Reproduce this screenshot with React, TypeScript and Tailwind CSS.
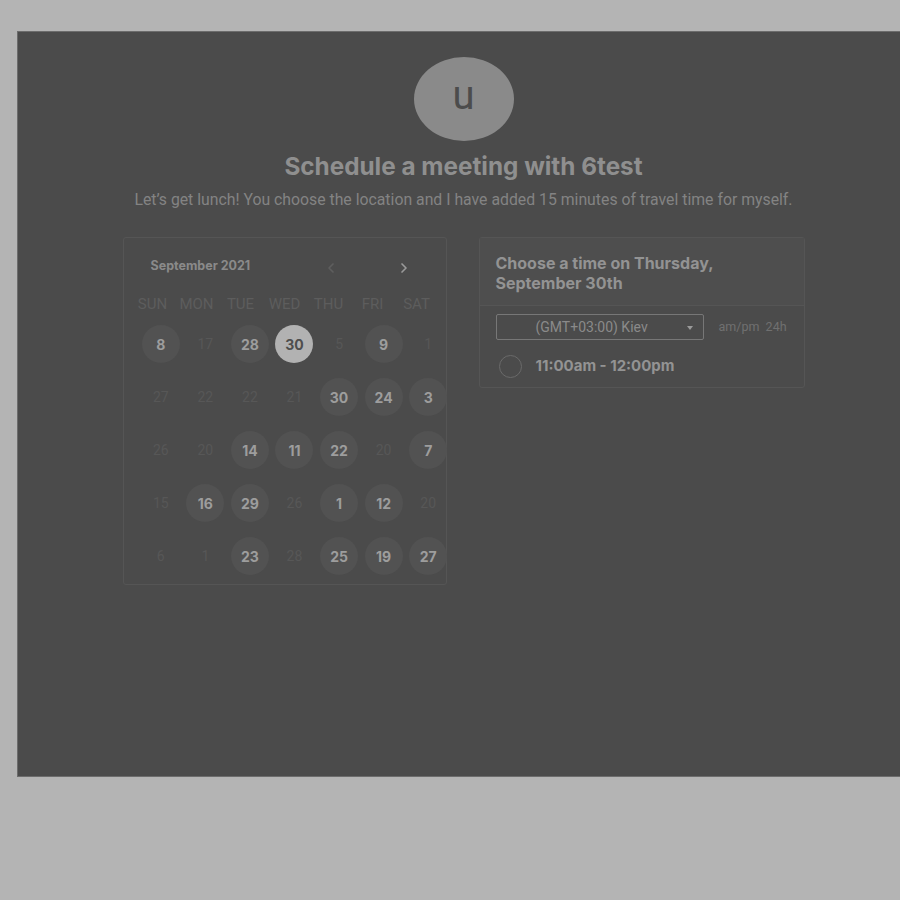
import { ChevronLeft, ChevronRight } from "lucide-react";

type Day = { n: number; on?: boolean; sel?: boolean };

const weekdays = ["SUN", "MON", "TUE", "WED", "THU", "FRI", "SAT"];

const rows: Day[][] = [
  [{ n: 8, on: true }, { n: 17 }, { n: 28, on: true }, { n: 30, sel: true }, { n: 5 }, { n: 9, on: true }, { n: 1 }],
  [{ n: 27 }, { n: 22 }, { n: 22 }, { n: 21 }, { n: 30, on: true }, { n: 24, on: true }, { n: 3, on: true }],
  [{ n: 26 }, { n: 20 }, { n: 14, on: true }, { n: 11, on: true }, { n: 22, on: true }, { n: 20 }, { n: 7, on: true }],
  [{ n: 15 }, { n: 16, on: true }, { n: 29, on: true }, { n: 26 }, { n: 1, on: true }, { n: 12, on: true }, { n: 20 }],
  [{ n: 6 }, { n: 1 }, { n: 23, on: true }, { n: 28 }, { n: 25, on: true }, { n: 19, on: true }, { n: 27, on: true }],
];

function DayCell({ day }: { day: Day }) {
  if (day.sel) {
    return (
      <div className="flex h-[38px] w-[38px] items-center justify-center rounded-full bg-[#b2b2b2] text-[14px] font-bold text-[#4e4e4e]">
        {day.n}
      </div>
    );
  }
  if (day.on) {
    return (
      <div className="flex h-[38px] w-[38px] items-center justify-center rounded-full bg-[#525252] text-[14px] font-bold text-[#9d9d9d]">
        {day.n}
      </div>
    );
  }
  return (
    <div className="flex h-[38px] w-[38px] items-center justify-center font-['Roboto',sans-serif] text-[14px] text-[#575757]">
      {day.n}
    </div>
  );
}

export default function App() {
  return (
    <div className="h-[900px] w-[900px] overflow-hidden bg-[#b4b4b4] pl-[17px] pt-[31px] font-['Inter',sans-serif]">
      <main className="flex h-[746px] w-[892px] flex-col items-center border-l border-t border-b border-[#6c6c6c] bg-[#4b4b4b]">
        <div className="mt-[25px] flex h-[84px] w-[100px] items-center justify-center rounded-[50%] bg-[#8a8a8a]">
          <span className="mb-[6px] font-['Roboto',sans-serif] text-[40px] leading-none text-[#4c4c4c]">
            u
          </span>
        </div>

        <h1 className="mt-[10px] text-[24.3px] font-bold leading-[30px] text-[#8f8f8f]">
          Schedule a meeting with 6test
        </h1>
        <p className="mt-[9px] font-['Roboto',sans-serif] text-[15.8px] leading-[20px] text-[#838383]">
          Let’s get lunch! You choose the location and I have added 15 minutes
          of travel time for myself.
        </p>

        <div className="mt-[27px] flex items-start gap-[32px]">
          <section className="h-[348px] w-[324px] rounded-[3px] border border-[#555555] pl-[15px] pt-[18px]">
            <div className="flex h-[20px] items-center pl-[12px]">
              <span className="w-[172px] text-[12.5px] font-bold text-[#8a8a8a]">
                September 2021
              </span>
              <ChevronLeft className="mt-[3px] h-[16px] w-[16px] text-[#5e5e5e]" strokeWidth={2.5} />
              <ChevronRight className="ml-[57px] mt-[3px] h-[16px] w-[16px] text-[#9a9a9a]" strokeWidth={2.5} />
            </div>

            <div className="ml-[-8px] mt-[18px] grid w-[308px] grid-cols-7">
              {weekdays.map((w) => (
                <div
                  key={w}
                  className="text-center font-['Roboto',sans-serif] text-[15px] leading-[20px] text-[#5d5d5d]"
                >
                  {w}
                </div>
              ))}
            </div>

            <div className="mt-[11px] flex w-[312px] flex-col gap-[15px]">
              {rows.map((row, i) => (
                <div key={i} className="grid grid-cols-7">
                  {row.map((d, j) => (
                    <div key={j} className="flex justify-center">
                      <DayCell day={d} />
                    </div>
                  ))}
                </div>
              ))}
            </div>
          </section>

          <section className="w-[326px] rounded-[3px] border border-[#555555]">
            <div className="h-[68px] border-b border-[#555555] bg-[#4e4e4e] px-[16px] pt-[15px]">
              <h2 className="text-[16px] font-bold leading-[20px] text-[#939393]">
                Choose a time on Thursday,
                <br />
                September 30th
              </h2>
            </div>
            <div className="flex items-center px-[16px] pt-[8px]">
              <div className="relative flex h-[26px] w-[208px] items-center rounded-[2px] border border-[#777777] pl-[39px] font-['Roboto',sans-serif] text-[14px] text-[#8a8a8a]">
                (GMT+03:00) Kiev
                <span className="absolute right-[10px] top-[11px] h-0 w-0 border-x-[3px] border-t-[4px] border-x-transparent border-t-[#9a9a9a]" />
              </div>
              <span className="ml-[15px] font-['Roboto',sans-serif] text-[12.5px] text-[#707070]">
                am/pm&nbsp;&nbsp;24h
              </span>
            </div>
            <div className="flex h-[47px] items-center px-[19px] pt-[6px]">
              <span className="h-[23px] w-[23px] rounded-full border border-[#6a6a6a]" />
              <span className="ml-[14px] text-[15px] font-bold text-[#939393]">
                11:00am - 12:00pm
              </span>
            </div>
          </section>
        </div>
      </main>
    </div>
  );
}
